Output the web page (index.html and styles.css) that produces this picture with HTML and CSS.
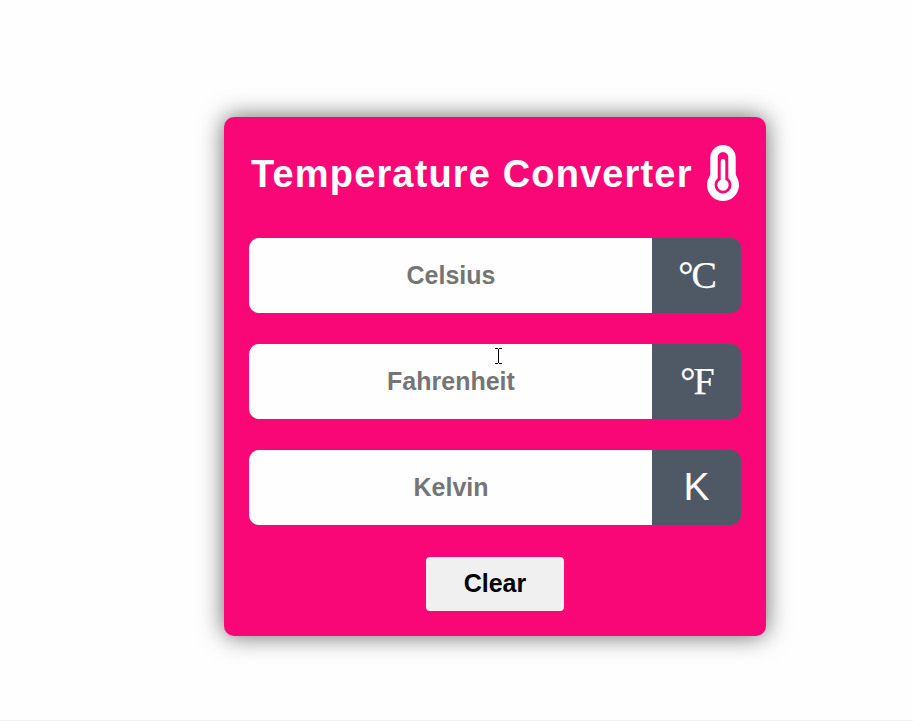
FILE: index.html
```html
<!DOCTYPE html>
<html lang="en">
<head>
<meta charset="utf-8">
<title>Temperature Converter</title>
<link rel="stylesheet" href="styles.css">
</head>
<body>
<main class="card">
  <header class="header">
    <h1 class="title">Temperature Converter</h1>
    <svg class="thermometer" viewBox="0 0 32 56" width="32" height="56" aria-hidden="true">
      <path fill="#fff" d="M3.3 12.7a12.7 12.7 0 0 1 25.4 0v16q0 1.5 1 3a16 16 0 1 1-27.4 0q1-1.5 1-3z"/>
      <path fill="#f90776" d="M10.7 12.3a5.3 5.3 0 0 1 10.6 0V33.3a8.5 8.5 0 1 1-10.6 0z"/>
      <path fill="#fff" d="M13.7 16.4a2.3 2.3 0 0 1 4.6 0V34.8a5.7 5.7 0 1 1-4.6 0z"/>
    </svg>
  </header>
  <div class="field">
    <input class="input" type="text" placeholder="Celsius">
    <span class="unit serif">°C</span>
  </div>
  <div class="field">
    <input class="input" type="text" placeholder="Fahrenheit">
    <span class="unit serif">°F</span>
    <svg class="cursor" viewBox="0 0 7 16" width="7" height="16" aria-hidden="true" shape-rendering="crispEdges">
      <path fill="#000" d="M0 0h3v1H0zM4 0h3v1H4zM3 1h1v14H3zM0 15h3v1H0zM4 15h3v1H4z"/>
    </svg>
  </div>
  <div class="field">
    <input class="input" type="text" placeholder="Kelvin">
    <span class="unit">K</span>
  </div>
  <button class="clear" type="button">Clear</button>
</main>
</body>
</html>
```
FILE: styles.css
```css
* {
  box-sizing: border-box;
  margin: 0;
  padding: 0;
}

body {
  height: 721px;
  padding: 117px 0 0 224px;
  background: #fefefe;
  border-bottom: 1px solid #f1f1f1;
  font-family: "Liberation Sans", Arial, sans-serif;
  overflow: hidden;
}

.card {
  display: flex;
  flex-direction: column;
  width: 542px;
  height: 519px;
  padding: 25px;
  border-radius: 10px;
  background: #f90776;
  box-shadow: 0 0 25px rgba(0, 0, 0, 0.6);
}

.header {
  display: flex;
  align-items: center;
  justify-content: space-between;
  height: 62px;
  margin-bottom: 34px;
  padding: 0 2px;
}

.title {
  padding-top: 2px;
  color: #fff;
  font-size: 38px;
  letter-spacing: 1.15px;
  white-space: nowrap;
}

.thermometer {
  flex: none;
}

.field {
  position: relative;
  display: flex;
  height: 75px;
  margin-bottom: 31px;
  border-radius: 10px;
  background: #4f5966;
  overflow: hidden;
}

.input {
  width: 403px;
  padding-left: 1px;
  border: 0;
  background: #fefefe;
  font: bold 25px "Liberation Sans", Arial, sans-serif;
  text-align: center;
}

.input::placeholder {
  color: #757575;
}

.unit {
  display: flex;
  flex: 1;
  align-items: center;
  justify-content: center;
  padding-bottom: 2px;
  color: #fff;
  font-size: 39px;
}

.serif {
  font-family: "Liberation Serif", "Times New Roman", serif;
  font-size: 38px;
  letter-spacing: -2px;
  -webkit-text-stroke: 0.25px #fff;
}

.cursor {
  position: absolute;
  left: 246px;
  top: 4px;
}

.clear {
  align-self: center;
  width: 138px;
  height: 54px;
  margin-top: 1px;
  padding-bottom: 2px;
  border: 0;
  border-radius: 4px;
  background: #f0f0f0;
  color: #000;
  font: bold 25px "Liberation Sans", Arial, sans-serif;
}
```
